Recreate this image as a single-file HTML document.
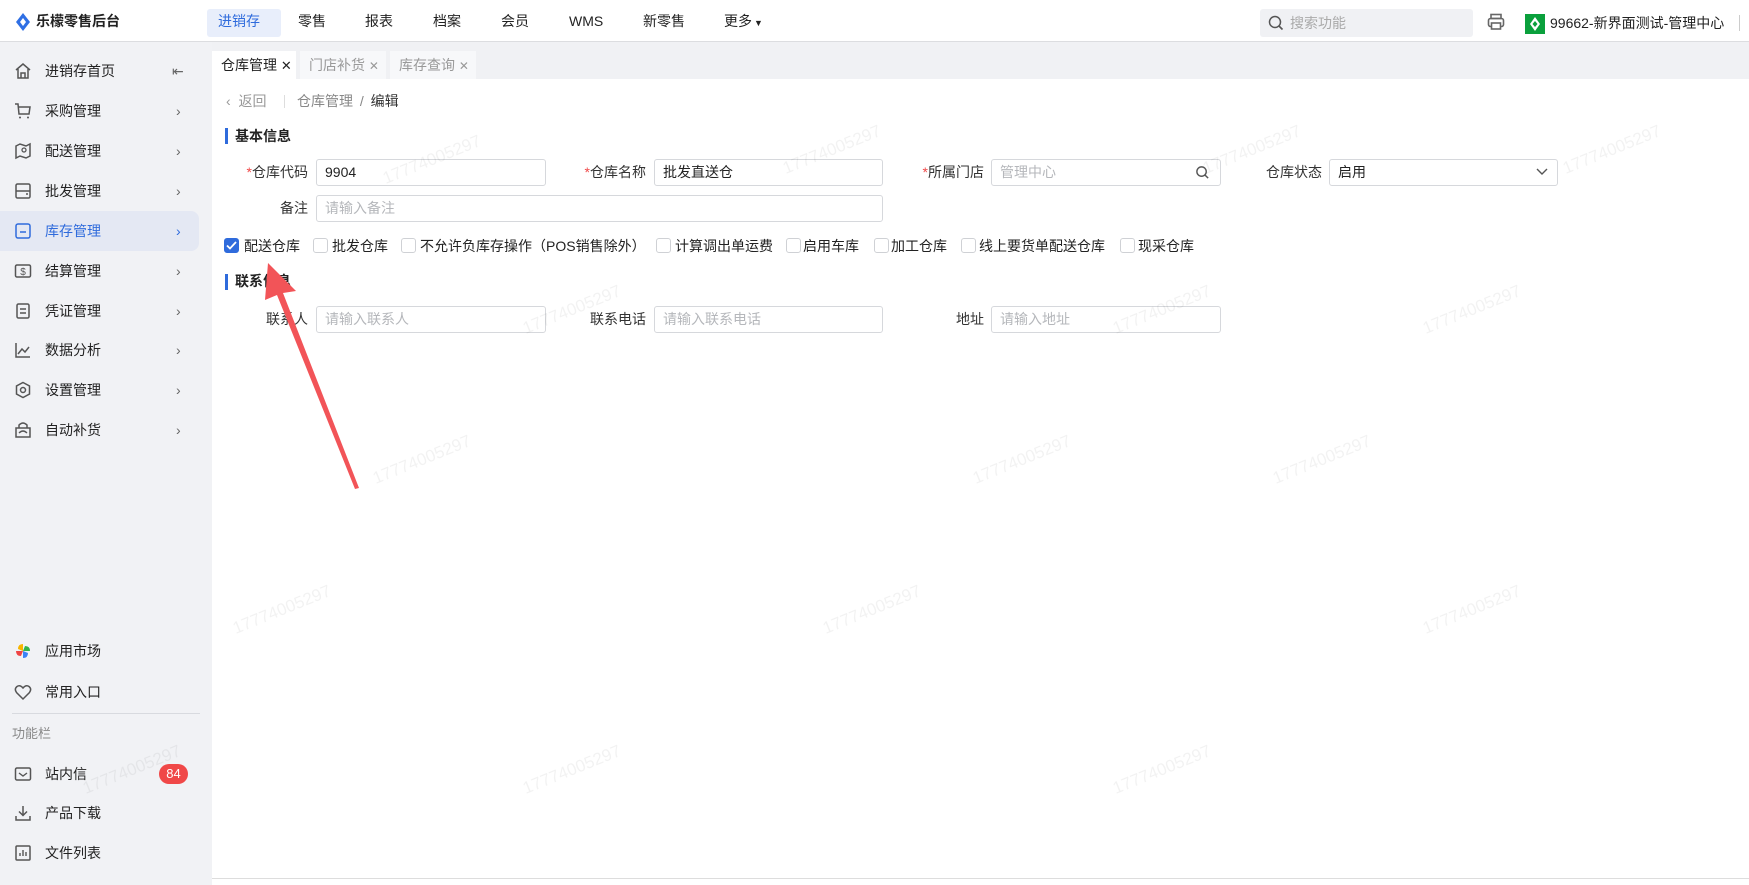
<!DOCTYPE html>
<html><head><meta charset="utf-8">
<style>
*{margin:0;padding:0;box-sizing:border-box}
body{width:1749px;height:885px;overflow:hidden;background:#fff;font-family:"Liberation Sans","Noto Sans CJK SC",sans-serif;font-size:14px;color:#222;position:relative}
.a{position:absolute}
.top{left:0;top:0;width:1749px;height:42px;background:#fff;border-bottom:1px solid #dcdde0}
.nav{top:0;height:42px;line-height:42px;font-size:14px;color:#222}
.side{left:0;top:42px;width:212px;height:843px;background:#f1f2f5}
.si{left:0;width:212px;height:40px;line-height:40px}
.si .t{position:absolute;left:45px;font-size:14px}
.si .ch{position:absolute;left:176px;top:0;color:#666}
.si svg.ic{position:absolute;left:14px;top:11px}
.tabs{left:212px;top:42px;width:1537px;height:37px;background:#f0f1f4}
.tab{top:51px;height:28px;line-height:28px;padding-left:9px;font-size:14px}
.lbl{font-size:14px;color:#333;text-align:right;height:27px;line-height:27px}
.inp{border:1px solid #d6d8dc;border-radius:3px;height:27px;line-height:25px;padding-left:8px;font-size:14px;background:#fff}
.ph{color:#b5b7bb}
.cb{width:15px;height:15px;border:1px solid #cfd1d5;border-radius:3px;background:#fff;top:238px}
.ct{top:236px;font-size:14px;line-height:20px}
.wm{color:rgba(0,0,0,0.05);font-size:17px;transform:rotate(-22deg);white-space:nowrap}
</style></head><body>

<div class="a top"></div>
<svg class="a" style="left:15px;top:13px" width="16" height="18" viewBox="0 0 16 18"><path d="M8 0 L15 9 L8 18 L1 9Z" fill="#2f6fe4"/><path d="M8 5 L11 9 L8 13 L5 9Z" fill="#fff"/></svg>
<div class="a" style="left:36px;top:11px;font-size:14px;font-weight:bold;color:#222;line-height:20px">乐檬零售后台</div>
<div class="a" style="left:207px;top:9px;width:74px;height:28px;background:#e8eefb;border-radius:3px"></div>
<div class="a nav" style="left:218px;color:#2f6bdc">进销存</div>
<div class="a nav" style="left:298px">零售</div>
<div class="a nav" style="left:365px">报表</div>
<div class="a nav" style="left:433px">档案</div>
<div class="a nav" style="left:501px">会员</div>
<div class="a nav" style="left:569px">WMS</div>
<div class="a nav" style="left:643px">新零售</div>
<div class="a nav" style="left:724px">更多<span style="font-size:9px;margin-left:2px">▼</span></div>
<div class="a" style="left:1260px;top:9px;width:213px;height:28px;background:#f0f1f4;border-radius:3px"></div>
<svg class="a" style="left:1268px;top:15px" width="16" height="16" viewBox="0 0 16 16"><circle cx="7" cy="7" r="5.5" fill="none" stroke="#555" stroke-width="1.5"/><path d="M11 11 L14.5 14.5" stroke="#555" stroke-width="1.6"/></svg>
<div class="a" style="left:1290px;top:12px;color:#aaa;line-height:22px">搜索功能</div>
<svg class="a" style="left:1487px;top:13px" width="18" height="18" viewBox="0 0 18 18"><rect x="4" y="1.5" width="10" height="4" fill="none" stroke="#666" stroke-width="1.6"/><rect x="1.5" y="5.5" width="15" height="8" rx="2" fill="none" stroke="#666" stroke-width="1.6"/><rect x="4.5" y="10" width="9" height="6" fill="#fff" stroke="#666" stroke-width="1.6"/></svg>
<div class="a" style="left:1525px;top:14px;width:20px;height:20px;background:#0aa03c"></div>
<svg class="a" style="left:1528px;top:16px" width="14" height="16" viewBox="0 0 14 16"><path d="M7 1 L12 8 L7 15 L2 8Z" fill="#fff"/><path d="M7 5 L9.5 8 L7 11 L4.5 8Z" fill="#0aa03c"/></svg>
<div class="a" style="left:1550px;top:12px;font-size:14px;line-height:22px">99662-新界面测试-管理中心</div>
<div class="a" style="left:1739px;top:15px;width:1px;height:16px;background:#ccc"></div>

<div class="a side"></div>
<div class="a" style="left:0;top:211px;width:199px;height:40px;background:#e4e8f3;border-radius:0 8px 8px 0"></div>

<div class="a si" style="top:51px"><svg class="ic" width="18" height="18" viewBox="0 0 18 18"><path d="M2 8 L9 2 L16 8 M4 7 V16 H14 V7 M7 16 V11 H11 V16" fill="none" stroke="#555" stroke-width="1.5"/></svg><span class="t">进销存首页</span><span class="ch" style="left:172px">⇤</span></div>
<div class="a si" style="top:91px"><svg class="ic" width="18" height="18" viewBox="0 0 18 18"><path d="M1 2 H4 L5 12 H15 L16 5 H5" fill="none" stroke="#555" stroke-width="1.5"/><circle cx="6" cy="15.5" r="1" fill="#555"/><circle cx="14" cy="15.5" r="1" fill="#555"/></svg><span class="t">采购管理</span><span class="ch">›</span></div>
<div class="a si" style="top:131px"><svg class="ic" width="18" height="18" viewBox="0 0 18 18"><path d="M2 4 L6 2 L12 4 L16 2 V14 L12 16 L6 14 L2 16Z" fill="none" stroke="#555" stroke-width="1.5"/><circle cx="10" cy="8" r="2" fill="none" stroke="#555" stroke-width="1.3"/></svg><span class="t">配送管理</span><span class="ch">›</span></div>
<div class="a si" style="top:171px"><svg class="ic" width="18" height="18" viewBox="0 0 18 18"><rect x="2" y="2" width="14" height="14" rx="1.5" fill="none" stroke="#555" stroke-width="1.5"/><path d="M2 9 H16 M12 12 H14" stroke="#555" stroke-width="1.5"/></svg><span class="t">批发管理</span><span class="ch">›</span></div>
<div class="a si" style="top:211px;color:#2f6bdc"><svg class="ic" width="18" height="18" viewBox="0 0 18 18"><rect x="2" y="2" width="14" height="14" rx="2" fill="none" stroke="#2f6bdc" stroke-width="1.5"/><path d="M6 10 H12" stroke="#2f6bdc" stroke-width="1.5"/></svg><span class="t">库存管理</span><span class="ch" style="color:#2f6bdc">›</span></div>
<div class="a si" style="top:251px"><svg class="ic" width="18" height="18" viewBox="0 0 18 18"><rect x="1.5" y="3" width="15" height="12" rx="1.5" fill="none" stroke="#555" stroke-width="1.5"/><text x="9" y="13" font-size="10" text-anchor="middle" fill="#555" font-family="Liberation Sans">$</text></svg><span class="t">结算管理</span><span class="ch">›</span></div>
<div class="a si" style="top:291px"><svg class="ic" width="18" height="18" viewBox="0 0 18 18"><rect x="3" y="2" width="12" height="14" rx="1.5" fill="none" stroke="#555" stroke-width="1.5"/><path d="M6 7 H12 M6 11 H12" stroke="#555" stroke-width="1.4"/></svg><span class="t">凭证管理</span><span class="ch">›</span></div>
<div class="a si" style="top:330px"><svg class="ic" width="18" height="18" viewBox="0 0 18 18"><path d="M2 2 V16 H16 M4 13 L8 8 L11 11 L15 6" fill="none" stroke="#555" stroke-width="1.5"/></svg><span class="t">数据分析</span><span class="ch">›</span></div>
<div class="a si" style="top:370px"><svg class="ic" width="18" height="18" viewBox="0 0 18 18"><path d="M9 1.5 L15.5 5 V13 L9 16.5 L2.5 13 V5Z" fill="none" stroke="#555" stroke-width="1.5"/><circle cx="9" cy="9" r="2.5" fill="none" stroke="#555" stroke-width="1.5"/></svg><span class="t">设置管理</span><span class="ch">›</span></div>
<div class="a si" style="top:410px"><svg class="ic" width="18" height="18" viewBox="0 0 18 18"><path d="M5 7 V4 Q9 0 13 4 V7 M2 7 H16 V16 H2Z" fill="none" stroke="#555" stroke-width="1.5"/><path d="M5 12 Q9 8 13 12" fill="none" stroke="#555" stroke-width="1.3"/></svg><span class="t">自动补货</span><span class="ch">›</span></div>

<div class="a si" style="top:631px"><svg class="ic" width="18" height="18" viewBox="0 0 18 18"><path d="M9 9 V2 Q4 2 4 7Z" fill="#f7b500"/><path d="M9 9 H16 Q16 4 11 4Z" fill="#34b34a"/><path d="M9 9 V16 Q14 16 14 11Z" fill="#3b82f6"/><path d="M9 9 H2 Q2 14 7 14Z" fill="#ef4444"/></svg><span class="t">应用市场</span></div>
<div class="a si" style="top:672px"><svg class="ic" width="18" height="18" viewBox="0 0 18 18"><path d="M9 16 L2.5 9.5 Q0 6 3 3.5 Q6 1.5 9 5 Q12 1.5 15 3.5 Q18 6 15.5 9.5Z" fill="none" stroke="#555" stroke-width="1.5"/></svg><span class="t">常用入口</span></div>
<div class="a" style="left:12px;top:713px;width:188px;height:1px;background:#d8dadf"></div>
<div class="a" style="left:12px;top:724px;color:#888;font-size:13px;line-height:20px">功能栏</div>
<div class="a si" style="top:754px"><svg class="ic" width="18" height="18" viewBox="0 0 18 18"><rect x="1.5" y="3" width="15" height="12" rx="1.5" fill="none" stroke="#555" stroke-width="1.5"/><path d="M5 8 L9 11 L13 8" fill="none" stroke="#555" stroke-width="1.4"/></svg><span class="t">站内信</span></div>
<div class="a" style="left:159px;top:764px;width:29px;height:20px;border-radius:10px;background:#f04848;color:#fff;font-size:13px;text-align:center;line-height:20px">84</div>
<div class="a si" style="top:793px"><svg class="ic" width="18" height="18" viewBox="0 0 18 18"><path d="M9 2 V11 M5 7.5 L9 11.5 L13 7.5 M2 12 V16 H16 V12" fill="none" stroke="#555" stroke-width="1.5"/></svg><span class="t">产品下载</span></div>
<div class="a si" style="top:833px"><svg class="ic" width="18" height="18" viewBox="0 0 18 18"><rect x="2" y="2" width="14" height="14" rx="1" fill="none" stroke="#555" stroke-width="1.5"/><path d="M6 12 V9 M9 12 V6 M12 12 V8" stroke="#555" stroke-width="1.4"/></svg><span class="t">文件列表</span></div>

<div class="a tabs"></div>
<div class="a tab" style="left:212px;width:84px;background:#fff;color:#222">仓库管理 <span style="font-size:13px">✕</span></div>
<div class="a tab" style="left:300px;width:86px;background:#f7f8fa;color:#999">门店补货 <span style="font-size:12px">✕</span></div>
<div class="a tab" style="left:390px;width:86px;background:#f7f8fa;color:#999">库存查询 <span style="font-size:12px">✕</span></div>
<div class="a" style="left:212px;top:878px;width:1537px;height:1px;background:#ddd"></div>

<div class="a" style="left:226px;top:91px;color:#999;line-height:20px">‹ &nbsp;返回</div>
<div class="a" style="left:284px;top:95px;width:1px;height:13px;background:#ddd"></div>
<div class="a" style="left:297px;top:91px;color:#888;line-height:20px">仓库管理 <span style="margin:0 3px">/</span> <span style="color:#333">编辑</span></div>

<div class="a" style="left:225px;top:128px;width:3px;height:16px;background:#2f6bdc"></div>
<div class="a" style="left:235px;top:126px;font-weight:bold;line-height:20px">基本信息</div>

<div class="a lbl" style="left:212px;width:96px;top:159px"><span style="color:#f04848">*</span>仓库代码</div>
<div class="a inp" style="left:316px;top:159px;width:230px">9904</div>
<div class="a lbl" style="left:550px;width:96px;top:159px"><span style="color:#f04848">*</span>仓库名称</div>
<div class="a inp" style="left:654px;top:159px;width:229px">批发直送仓</div>
<div class="a lbl" style="left:888px;width:96px;top:159px"><span style="color:#f04848">*</span>所属门店</div>
<div class="a inp ph" style="left:991px;top:159px;width:230px">管理中心</div>
<svg class="a" style="left:1195px;top:165px" width="15" height="15" viewBox="0 0 16 16"><circle cx="7" cy="7" r="5" fill="none" stroke="#555" stroke-width="1.5"/><path d="M10.5 10.5 L14 14" stroke="#555" stroke-width="1.6"/></svg>
<div class="a lbl" style="left:1226px;width:96px;top:159px">仓库状态</div>
<div class="a inp" style="left:1329px;top:159px;width:229px">启用</div>
<svg class="a" style="left:1536px;top:168px" width="12" height="8" viewBox="0 0 12 8"><path d="M1 1 L6 6 L11 1" fill="none" stroke="#555" stroke-width="1.4"/></svg>

<div class="a lbl" style="left:212px;width:96px;top:195px">备注</div>
<div class="a inp ph" style="left:316px;top:195px;width:567px">请输入备注</div>

<div class="a cb" style="left:224px;background:#2f6bdc;border-color:#2f6bdc"></div>
<svg class="a" style="left:226px;top:241px" width="11" height="9" viewBox="0 0 11 9"><path d="M1 4.5 L4 7.5 L10 1" fill="none" stroke="#fff" stroke-width="1.8"/></svg>
<div class="a ct" style="left:244px">配送仓库</div>
<div class="a cb" style="left:313px"></div><div class="a ct" style="left:332px">批发仓库</div>
<div class="a cb" style="left:401px"></div><div class="a ct" style="left:420px">不允许负库存操作（POS销售除外）</div>
<div class="a cb" style="left:656px"></div><div class="a ct" style="left:675px">计算调出单运费</div>
<div class="a cb" style="left:786px"></div><div class="a ct" style="left:803px">启用车库</div>
<div class="a cb" style="left:874px"></div><div class="a ct" style="left:891px">加工仓库</div>
<div class="a cb" style="left:961px"></div><div class="a ct" style="left:979px">线上要货单配送仓库</div>
<div class="a cb" style="left:1120px"></div><div class="a ct" style="left:1138px">现采仓库</div>

<div class="a" style="left:225px;top:274px;width:3px;height:16px;background:#2f6bdc"></div>
<div class="a" style="left:235px;top:271px;font-weight:bold;line-height:20px">联系信息</div>

<div class="a lbl" style="left:212px;width:96px;top:306px">联系人</div>
<div class="a inp ph" style="left:316px;top:306px;width:230px">请输入联系人</div>
<div class="a lbl" style="left:550px;width:96px;top:306px">联系电话</div>
<div class="a inp ph" style="left:654px;top:306px;width:229px">请输入联系电话</div>
<div class="a lbl" style="left:888px;width:96px;top:306px">地址</div>
<div class="a inp ph" style="left:991px;top:306px;width:230px">请输入地址</div>

<div class="a wm" style="left:380px;top:150px">17774005297</div>
<div class="a wm" style="left:780px;top:140px">17774005297</div>
<div class="a wm" style="left:1200px;top:140px">17774005297</div>
<div class="a wm" style="left:1560px;top:140px">17774005297</div>
<div class="a wm" style="left:520px;top:300px">17774005297</div>
<div class="a wm" style="left:1110px;top:300px">17774005297</div>
<div class="a wm" style="left:1420px;top:300px">17774005297</div>
<div class="a wm" style="left:370px;top:450px">17774005297</div>
<div class="a wm" style="left:970px;top:450px">17774005297</div>
<div class="a wm" style="left:1270px;top:450px">17774005297</div>
<div class="a wm" style="left:230px;top:600px">17774005297</div>
<div class="a wm" style="left:820px;top:600px">17774005297</div>
<div class="a wm" style="left:1420px;top:600px">17774005297</div>
<div class="a wm" style="left:520px;top:760px">17774005297</div>
<div class="a wm" style="left:1110px;top:760px">17774005297</div>
<div class="a wm" style="left:80px;top:760px">17774005297</div>

<svg class="a" style="left:0;top:0" width="1749" height="885"><polygon points="268,263 296,291 283,293 359,488 355,489 277,295 265,300" fill="#f25458"/></svg>
</body></html>
